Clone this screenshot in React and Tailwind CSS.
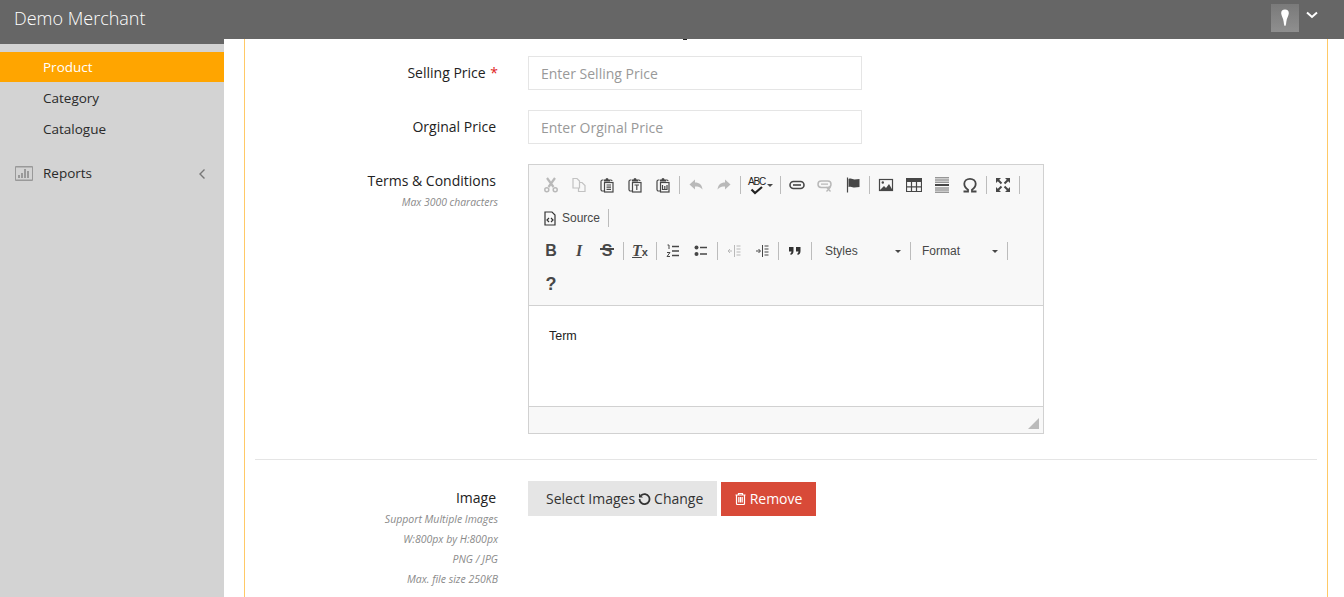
const SANS = "font-['Open_Sans',sans-serif]";

function Sep() {
  return <span className="w-px h-[18px] mx-[2px] bg-[#bcbcbc] shrink-0" />;
}

function Ico({ op = 1, children }) {
  return (
    <span className="w-[28px] h-[28px] flex items-center justify-center shrink-0" style={{ opacity: op }}>
      <svg width="16" height="16" viewBox="0 0 16 16" fill="none" stroke="#474747" strokeWidth="1.2">
        {children}
      </svg>
    </span>
  );
}

function Clip({ letter }) {
  return (
    <>
      <path d="M4.500 3H3.500a1.500 1.500 0 0 0-1.500 1.500v8a1.500 1.500 0 0 0 1.500 1.500h1.500M11 3h1a1 1 0 0 1 1 1" />
      <path d="M5 4.500V2.500h1.500a1.500 1.500 0 0 1 3 0H11v2z" fill="#474747" stroke="none" />
      <rect x="5.500" y="5.500" width="8.500" height="9.500" />
      {letter}
    </>
  );
}

export default function App() {
  return (
    <div className={`flex w-[1344px] h-[597px] overflow-hidden bg-white ${SANS}`}>
      <aside className="w-[224px] shrink-0 bg-[#d3d3d3] text-[13.5px] text-[#2a2a2a]">
        <div className="h-[44px] bg-[#666] text-white text-[18px] font-light leading-[36px] pl-[14px]">Demo Merchant</div>
        <div className="mt-[8px] h-[30px] bg-[#ffa500] text-white pl-[43px] leading-[30px]">Product</div>
        <div className="h-[31px] pl-[43px] leading-[32px]">Category</div>
        <div className="h-[31px] pl-[43px] leading-[32px]">Catalogue</div>
        <div className="mt-[14px] h-[31px] flex items-center pl-[15px] pr-[18px]">
          <svg width="18" height="15" viewBox="0 0 18 15" fill="#999" stroke="none">
            <path d="M1 0h16a1 1 0 0 1 1 1v13a1 1 0 0 1-1 1H1a1 1 0 0 1-1-1V1a1 1 0 0 1 1-1zm0 1.500v12h16v-12z" />
            <rect x="3" y="9" width="2" height="3" />
            <rect x="6" y="7" width="2" height="5" />
            <rect x="9" y="3" width="2" height="9" />
            <rect x="12" y="5" width="2" height="7" />
          </svg>
          <span className="ml-[10px] flex-1">Reports</span>
          <svg width="8" height="12" viewBox="0 0 8 12" fill="none" stroke="#777" strokeWidth="1.4">
            <path d="M6.500 1.500 2 6l4.500 4.500" />
          </svg>
        </div>
      </aside>

      <main className="flex-1 min-w-0">
        <header className="h-[39px] bg-[#666] flex items-start justify-end pt-[4px] pr-[26px] gap-[7px]">
          <div className="w-[28px] h-[28px] bg-gradient-to-b from-[#7a7a7a] to-[#8f8f8f] flex items-center justify-center">
            <svg width="10" height="22" viewBox="0 0 10 22" fill="#fff">
              <path d="M5 2.500c2.500 0 4 1.500 3.800 4C8.600 9 6.700 11 6.300 15c-.2 2-.5 4-1.300 4s-1.100-2-1.300-4C3.300 11 1.400 9 1.200 6.500 1 4 2.500 2.500 5 2.500z" />
            </svg>
          </div>
          <svg className="mt-[7px]" width="12" height="8" viewBox="0 0 12 8" fill="none" stroke="#fff" strokeWidth="2">
            <path d="M1 1.500 6 6l5-4.500" />
          </svg>
        </header>

        <section className="ml-[20px] w-[1084px] h-[558px] border-x border-[#ffc966] px-[10px] overflow-hidden">
          {/* tail of a heading scrolled under the header */}
          <div className="h-[17px]">
            <div className="ml-[428px] w-[4px] h-px bg-[#222]" />
          </div>
          <div className="flex">
            <div className="w-[243px] text-right text-[14px] text-[#222] pt-[6px]">
              Selling Price <span className="text-[#e02222] ml-[1px]">*</span>
            </div>
            <input
              className="ml-[30px] w-[334px] h-[34px] border border-[#e5e5e5] px-[12px] text-[14px] placeholder:text-[#999] outline-none"
              placeholder="Enter Selling Price"
              readOnly
            />
          </div>
          <div className="flex mt-[20px]">
            <div className="w-[241px] text-right text-[14px] text-[#222] pt-[6px]">Orginal Price</div>
            <input
              className="ml-[32px] w-[334px] h-[34px] border border-[#e5e5e5] px-[12px] text-[14px] placeholder:text-[#999] outline-none"
              placeholder="Enter Orginal Price"
              readOnly
            />
          </div>

          <div className="flex mt-[20px]">
            <div className="w-[243px] text-right pt-[6px]">
              <div className="text-[14px] text-[#222] pr-[2px]">Terms &amp; Conditions</div>
              <div className="text-[10.4px] italic text-[#8a8a8a] mt-[4px]">Max 3000 characters</div>
            </div>
            <div className="ml-[30px] w-[516px] h-[270px] border border-[#d1d1d1] font-['Liberation_Sans',sans-serif] flex flex-col">
              <div className="h-[141px] bg-[#f8f8f8] border-b border-[#d1d1d1] pl-[8px] pt-[6px] text-[12px] text-[#474747]">
                <div className="h-[28px] flex items-center">
                  <Ico op={0.35}>
                    <path d="M4 1l6.500 9M12 1 5.500 10" strokeWidth="2.200" />
                    <circle cx="3.800" cy="12.800" r="2" strokeWidth="1.500" />
                    <circle cx="12.200" cy="12.800" r="2" strokeWidth="1.500" />
                  </Ico>
                  <Ico op={0.3}>
                    <path d="M2 1.500h4l2.500 2.500v7H2zM8.500 5.500H11l3 3v6H7.500v-3.500" />
                  </Ico>
                  <Ico><Clip letter={<path d="M7.500 8h4.500M7.500 10.200h4.500M7.500 12.400h4.500" />} /></Ico>
                  <Ico><Clip letter={<path d="M7.500 8h4.500M9.800 8v5" />} /></Ico>
                  <Ico><Clip letter={<path d="M7.500 8v4.500h4.500V8M9.800 9v3.500" />} /></Ico>
                  <Sep />
                  <Ico op={0.35}>
                    <path d="M7 2.500 1.500 7.500 7 12.500V9.500c3 0 5.500 .5 7.500 3-.5-4.500-3-7-7.500-7z" fill="#474747" stroke="none" />
                  </Ico>
                  <Ico op={0.35}>
                    <path d="M9 2.500l5.500 5L9 12.500V9.500c-3 0-5.500 .5-7.500 3 .5-4.500 3-7 7.500-7z" fill="#474747" stroke="none" />
                  </Ico>
                  <Sep />
                  <span className="w-[35px] h-[28px] shrink-0 relative">
                    <span className="absolute left-[5px] top-[6px] text-[10px] leading-none tracking-[-1.2px] text-[#222]">ABC</span>
                    <svg className="absolute left-[7px] top-[15px]" width="14" height="9" viewBox="0 0 14 9" fill="none" stroke="#222" strokeWidth="2.200">
                      <path d="M1.500 3.500 5 7l7-6" />
                    </svg>
                    <span className="absolute left-[24px] top-[13px] border-x-[3px] border-t-[3px] border-x-transparent border-t-[#474747]" />
                  </span>
                  <Sep />
                  <Ico>
                    <rect x="1" y="4.500" width="14" height="7" rx="3.500" strokeWidth="1.600" />
                    <path d="M4 8h8" strokeWidth="1.600" />
                  </Ico>
                  <Ico op={0.35}>
                    <rect x="1" y="4" width="13" height="6.500" rx="3.200" strokeWidth="1.500" />
                    <path d="M4 7.200h7M9.500 10l4 4.500M13.500 10l-4 4.500" strokeWidth="1.300" />
                  </Ico>
                  <Ico>
                    <path d="M2.500 .5v15" />
                    <path d="M3.500 2c3-1.200 4 .5 6 .5l5-.5v8l-5 .5c-2 0-3-1.500-6-.5z" fill="#474747" stroke="none" />
                  </Ico>
                  <Sep />
                  <Ico>
                    <rect x="1.500" y="2.500" width="13" height="11" />
                    <circle cx="4.800" cy="5.500" r="1.200" fill="#474747" stroke="none" />
                    <path d="M2 13l4-4 2 2 3-4 3.500 6z" fill="#474747" stroke="none" />
                  </Ico>
                  <Ico>
                    <path d="M.5 1.500h15v13H.5z" />
                    <path d="M.5 1.500h15v3.500H.5z" fill="#474747" stroke="none" />
                    <path d="M.5 9.800h15M5.500 5v9.500M10.500 5v9.500" />
                  </Ico>
                  <Ico>
                    <path d="M1 .8h14M1 3h14M1 5.200h14M1 11h14M1 13h14M1 15.200h14" strokeWidth="0.800" />
                    <path d="M1 8h14" strokeWidth="2" />
                  </Ico>
                  <Ico>
                    <path d="M1.500 14.500h4.500v-1.800C3.500 11.200 2.300 9 2.300 6.800 2.300 3.700 4.800 1.800 8 1.800s5.700 1.900 5.700 5c0 2.200-1.200 4.400-3.700 5.900v1.800h4.500" strokeWidth="1.800" />
                  </Ico>
                  <Sep />
                  <Ico>
                    <path d="M1 1h5L1 6zM15 1h-5l5 5zM1 15h5l-5-5zM15 15h-5l5-5z" fill="#474747" stroke="none" />
                    <path d="M3 3l3.500 3.500M13 3 9.500 6.500M3 13l3.500-3.500M13 13 9.500 9.500" strokeWidth="2" />
                  </Ico>
                  <Sep />
                </div>
                <div className="h-[28px] mt-[5px] flex items-center pl-[7px]">
                  <svg width="12" height="15" viewBox="0 0 12 15" fill="none" stroke="#333" strokeWidth="1.200">
                    <path d="M1 1h7l3 3v10H1z" />
                    <path d="M5 7 3 9l2 2M7 7l2 2-2 2" />
                  </svg>
                  <span className="ml-[6px] mr-[6px]">Source</span>
                  <Sep />
                </div>
                <div className="h-[28px] mt-[5px] flex items-center">
                  <span className="w-[28px] text-center text-[16px] font-bold">B</span>
                  <span className="w-[28px] text-center text-[16px] font-bold italic font-['Liberation_Serif',serif]">I</span>
                  <span className="w-[28px] text-center text-[16px] font-bold relative">
                    S
                    <span className="absolute left-[7px] top-[9px] w-[14px] h-[2px] bg-[#474747]" />
                  </span>
                  <Sep />
                  <span className="w-[28px] flex items-baseline justify-center text-[16px] font-bold italic font-['Liberation_Serif',serif]">
                    <span className="underline">T</span>
                    <span className="text-[11px] not-italic font-['Liberation_Sans',sans-serif] leading-none -mb-[2px]">x</span>
                  </span>
                  <Sep />
                  <Ico>
                    <path d="M7 3.500h7M7 8h7M7 12.500h7" strokeWidth="1.400" />
                    <path d="M2.500 2h1.500v4M2 9.500h3L2 13.500h3" strokeWidth="1" />
                  </Ico>
                  <Ico>
                    <circle cx="3.500" cy="4.500" r="2" fill="#474747" stroke="none" />
                    <circle cx="3.500" cy="11" r="2" fill="#474747" stroke="none" />
                    <path d="M7 4.500h7M7 11h7" strokeWidth="1.600" />
                  </Ico>
                  <Sep />
                  <Ico op={0.35}>
                    <path d="M8.500 2v12M10.500 3h4M10.500 6h4M10.500 9h4M10.500 12h4M2 8h4M4 6 2 8l2 2" strokeWidth="1" />
                  </Ico>
                  <Ico>
                    <path d="M8.500 2v12M10.500 3h4M10.500 6h4M10.500 9h4M10.500 12h4M2 8h4M4.500 6l2 2-2 2" strokeWidth="1" />
                  </Ico>
                  <Sep />
                  <Ico>
                    <path d="M2 4h4.500v4c0 2.200-1 3.500-3 4v-1.700C4.200 10 4.500 9.300 4.500 8.500H2zM9 4h4.500v4c0 2.200-1 3.500-3 4v-1.700c.7-.3 1-1 1-1.800H9z" fill="#333" stroke="none" />
                  </Ico>
                  <Sep />
                  <span className="w-[94px] shrink-0 flex items-center pl-[11px] pr-[7px]">
                    <span className="flex-1">Styles</span>
                    <span className="border-x-[3px] border-t-[3px] border-x-transparent border-t-[#474747]" />
                  </span>
                  <Sep />
                  <span className="w-[92px] shrink-0 flex items-center pl-[9px] pr-[7px]">
                    <span className="flex-1">Format</span>
                    <span className="border-x-[3px] border-t-[3px] border-x-transparent border-t-[#474747]" />
                  </span>
                  <Sep />
                </div>
                <div className="h-[28px] mt-[5px] flex items-center">
                  <span className="w-[28px] text-center text-[18px] font-bold">?</span>
                </div>
              </div>
              <div className="flex-1 text-[12.5px] text-[#222] pt-[22px] pl-[20px] leading-[16px]">Term</div>
              <div className="h-[27px] bg-[#f8f8f8] border-t border-[#d1d1d1] flex items-end justify-end pr-[4px] pb-[4px]">
                <svg width="11" height="11" viewBox="0 0 11 11" fill="#bbb"><path d="M11 0v11H0z" /></svg>
              </div>
            </div>
          </div>

          <div className="h-px bg-[#e5e5e5] mt-[25px]" />

          <div className="flex mt-[21px]">
            <div className="w-[243px] text-right">
              <div className="text-[14px] text-[#222] pr-[2px] pt-[6px]">Image</div>
              <div className="text-[10.5px] italic text-[#8a8a8a] leading-[20px] mt-[1px]">
                <div>Support Multiple Images</div>
                <div>W:800px by H:800px</div>
                <div>PNG / JPG</div>
                <div>Max. file size 250KB</div>
              </div>
            </div>
            <div className="ml-[30px] flex items-end h-[35px] gap-[4px] text-[14px]">
              <div className="w-[189px] h-[35px] pb-[1px] bg-[#e5e5e5] text-[#333] flex items-center pl-[18px] gap-[3px]">
                Select Images
                <svg width="13" height="13" viewBox="0 0 13 13" fill="none" stroke="#333" strokeWidth="1.800">
                  <path d="M3 3.500a5 5 0 1 1-1.500 3.500" />
                  <path d="M1 1.500v4h4z" fill="#333" stroke="none" />
                </svg>
                Change
              </div>
              <div className="w-[95px] h-[34px] pb-[1px] bg-[#d84a38] text-white flex items-center justify-center gap-[4px]">
                <svg width="11" height="13" viewBox="0 0 11 13" fill="none" stroke="#fff" strokeWidth="1.200">
                  <path d="M.5 3h10M3.500 3V1.500h4V3M1.500 3v8.500a1 1 0 0 0 1 1h6a1 1 0 0 0 1-1V3M3.800 5v5.500M5.500 5v5.500M7.200 5v5.500" />
                </svg>
                Remove
              </div>
            </div>
          </div>
        </section>
      </main>
    </div>
  );
}
